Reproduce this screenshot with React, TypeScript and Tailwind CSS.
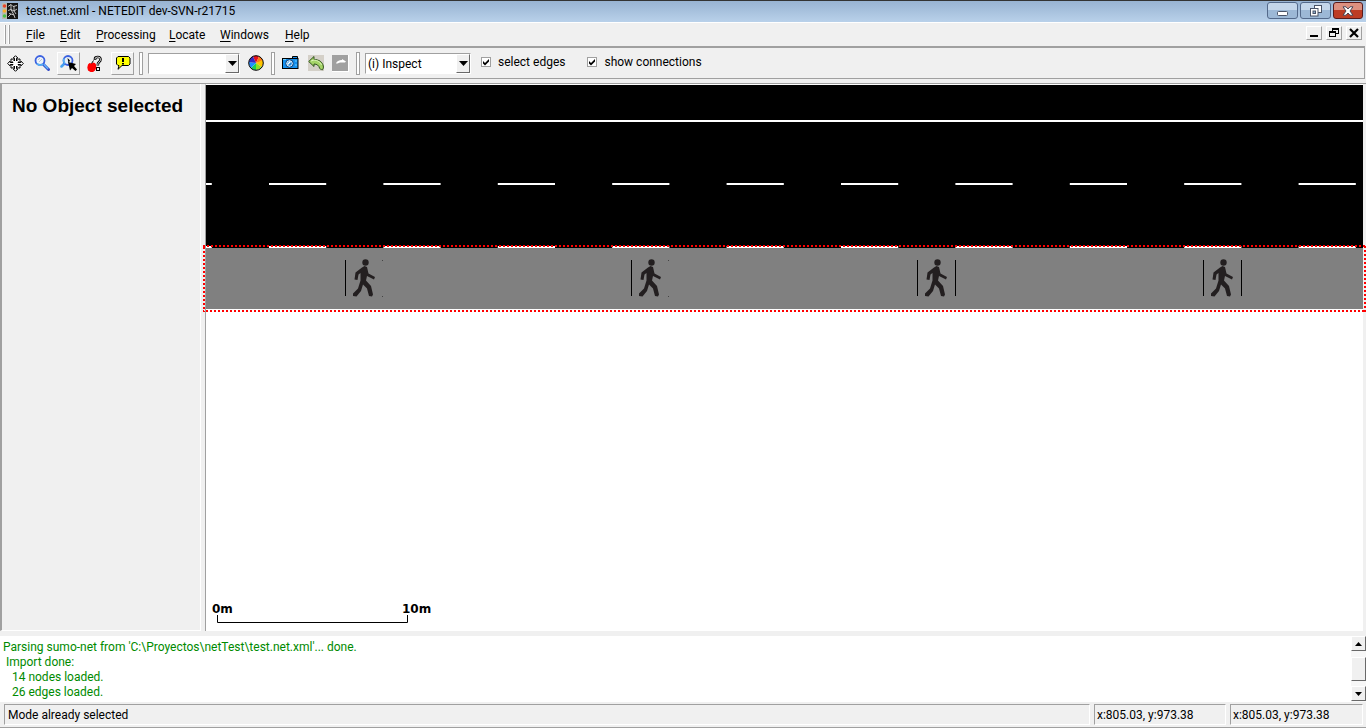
import React from 'react';

const RAISED = 'border border-t-white border-l-white border-r-[#a0a0a0] border-b-[#a0a0a0]';
const SUNKEN = 'border border-t-[#a0a0a0] border-l-[#a0a0a0] border-r-white border-b-white';

const MENUS = [
  { label: 'File', width: 'w-[34px]' },
  { label: 'Edit', width: 'w-9' },
  { label: 'Processing', width: 'w-[73px]' },
  { label: 'Locate', width: 'w-[51px]' },
  { label: 'Windows', width: 'w-[65px]' },
  { label: 'Help', width: 'w-9' },
];

const LOG_LINES = [
  "Parsing sumo-net from 'C:\\Proyectos\\netTest\\test.net.xml'... done.",
  ' Import done:',
  '   14 nodes loaded.',
  '   26 edges loaded.',
];

function AppIcon() {
  return (
    <svg className="w-4 h-4" viewBox="0 0 16 16" aria-hidden="true">
      <rect width="16" height="16" fill="#151515" />
      <rect width="5" height="16" fill="#b9b9ae" />
      <circle cx="2.5" cy="3" r="1.800" fill="#e8452a" />
      <circle cx="2.5" cy="8" r="1.800" fill="#f5b02c" />
      <circle cx="2.5" cy="13" r="1.800" fill="#4cc14a" />
      <path
        d="M6 3.500l3-2 2 2 4-1M6 7.500l3-1 3 1.500 3-2M6 14l3-3 3 1 1 3M9 1.500v5l3 5.500M12 3v5l2 3M7 10.500l2 .5"
        stroke="#e4e4e4"
        strokeWidth=".8"
        fill="none"
      />
    </svg>
  );
}

function MoveIcon() {
  return (
    <svg className="w-[17px] h-[17px]" viewBox="0 0 17 17" aria-hidden="true">
      <path
        d="M8.500.7 11 3.200H9.500V6L11.500 4H13V5.500L11 7.500H13.800V6L16.300 8.500 13.800 11V9.500H11L13 11.500V13H11.500L9.500 11V13.800H11L8.500 16.300 6 13.800H7.500V11L5.500 13H4V11.500L6 9.500H3.200V11L.7 8.500 3.200 6V7.500H6L4 5.500V4H5.500L7.500 6V3.200H6z"
        fill="#fff"
        stroke="#000"
      />
    </svg>
  );
}

function LensIcon() {
  return (
    <svg className="w-4 h-4" viewBox="0 0 16 16" aria-hidden="true">
      <path d="M9.500 9.500 14.500 14.500" stroke="#3a50c8" strokeWidth="3" strokeLinecap="round" />
      <path d="M9.500 9 14 13.800" stroke="#62b8ff" strokeWidth="1.300" />
      <circle cx="6" cy="5.500" r="4.500" fill="#eef4fa" stroke="#3c62e0" strokeWidth="1.800" />
      <path d="M3 8.500a4.500 4.500 0 0 0 6 .5" stroke="#55b4f5" strokeWidth="1.500" fill="none" />
      <path d="M4 5l2-2M5 7l3-3" stroke="#c0c8d0" />
    </svg>
  );
}

function LensCursorIcon() {
  return (
    <svg className="w-[17px] h-[17px]" viewBox="0 0 17 17" aria-hidden="true">
      <path d="M4 9 1.500 11.500" stroke="#45a0f0" strokeWidth="2.500" strokeLinecap="round" />
      <circle cx="8" cy="5.500" r="4.500" fill="#e8f0f8" stroke="#3c62e0" strokeWidth="1.800" />
      <path d="M4 3.500a4.500 4.500 0 0 0 1 5" stroke="#55b4f5" strokeWidth="1.500" fill="none" />
      <path d="M7.500 3l2.500 2.500L8.500 8z" fill="#000" />
      <path d="M8 7l8 2-2 2 3 3.500-1.500 1.500-3.500-3-2 2.500z" fill="#000" />
    </svg>
  );
}

function HelpIcon() {
  return (
    <svg className="w-[17px] h-[17px]" viewBox="0 0 17 17" aria-hidden="true">
      <path d="M8 5V4Q8 2 10.800 2T13.500 4.500q0 1.500-1.400 2.500T10.800 10.500" stroke="#000" strokeWidth="2.600" fill="none" />
      <path d="M8 4.500V4Q8 2 10.800 2T13.500 4.500q0 1.500-1.400 2.500T10.800 10" stroke="#f0f0f0" strokeWidth=".9" fill="none" />
      <rect x="9.500" y="12.500" width="3" height="3" fill="#f0f0f0" stroke="#000" />
      <path d="M1 9.500 2.500 8l2 .5L6 7.500l2 .5 1.200 2v3L8 15.500 6 17H3.500L1 15.500.3 12.500z" fill="#f00" />
      <path d="M4.500 8.500 6.500 5.500" stroke="#000" />
    </svg>
  );
}

function BalloonIcon() {
  return (
    <svg className="w-4 h-4" viewBox="0 0 16 16" aria-hidden="true">
      <path d="M3 1.500h10.500L15 3v6l-1.500 1.500H7l-4 3.800 1-3.800H3L1.500 9V3z" fill="#ffff00" stroke="#000" />
      <path d="M8 3V7M8 8v1.500" stroke="#000" strokeWidth="2" />
    </svg>
  );
}

function ColorWheelIcon() {
  return (
    <svg className="w-4 h-4" viewBox="0 0 16 16" aria-hidden="true">
      <path d="M8 8 5 1.500A7 7 0 0 1 11 1.500z" fill="#e8101c" />
      <path d="M8 8 11 1.500A7 7 0 0 1 15 6z" fill="#ff7a1a" />
      <path d="M8 8 14.500 5A7 7 0 0 1 13.500 12z" fill="#ffc400" />
      <path d="M8 8 13.500 12A7 7 0 0 1 8 15z" fill="#90e020" />
      <path d="M8 8V15A7 7 0 0 1 3 13z" fill="#18d058" />
      <path d="M8 8 3 13A7 7 0 0 1 1 7z" fill="#1e90ff" />
      <path d="M8 8 1 7A7 7 0 0 1 5 1.500z" fill="#3828c0" />
      <circle cx="8" cy="8" r="7.300" fill="none" stroke="#000" />
    </svg>
  );
}

function CameraIcon() {
  return (
    <svg className="w-[17px] h-4" viewBox="0 0 17 16" aria-hidden="true">
      <path d="M10.500 3.500V1.500h5v2" fill="#1e90e8" stroke="#000" />
      <rect x=".5" y="3.500" width="15.500" height="10" fill="#1590ee" stroke="#000" />
      <path d="M1 4.500h3M13 6h2M13 10h2" stroke="#70d0ff" />
      <circle cx="7.500" cy="8.500" r="3.800" fill="#d8efff" stroke="#043c78" />
      <circle cx="7.500" cy="8.500" r="2.300" fill="#1e88e0" />
      <path d="M5.500 9.500 8.500 6.500" stroke="#fff" strokeWidth="1.500" />
    </svg>
  );
}

function UndoIcon() {
  return (
    <svg className="w-4 h-4" viewBox="0 0 16 16" aria-hidden="true">
      <rect width="16" height="16" fill="#d4d0c8" />
      <path
        d="M.7 6.500 6 1.500v3c5 0 8.500 2.500 9.300 6.500.3 1.500 0 2.500-.8 3.800-1.500-.3-2-.5-2.800-1.300C11 10.500 9 9 6 9v2.500z"
        fill="#a5d468"
        stroke="#31551c"
      />
      <path d="M3 6l3-1c4 .5 6.500 2 7.500 5" stroke="#dcf5b8" fill="none" />
    </svg>
  );
}

function RedoIcon() {
  return (
    <svg className="w-[17px] h-[17px] border-r border-b border-white" viewBox="0 0 16 16" aria-hidden="true">
      <rect width="16" height="16" fill="#a0a0a0" />
      <path d="M4 8.500C4.500 6.500 7 5 10 5V4l4 2.500-1 1h-2.500L8 7.500 5.500 8.500z" fill="#fff" />
    </svg>
  );
}

function Grip() {
  return <div className="w-1 h-[23px] shrink-0 border border-[#a0a0a0] bg-white" />;
}

interface ToolButtonProps {
  label: string;
  raised?: boolean;
  children: React.ReactNode;
}

function ToolButton({ label, raised, children }: ToolButtonProps) {
  return (
    <button
      type="button"
      aria-label={label}
      className={`w-[23px] h-[23px] shrink-0 flex items-center justify-center border ${
        raised ? 'border-t-white border-l-white border-r-[#a0a0a0] border-b-[#a0a0a0]' : 'border-transparent'
      }`}
    >
      {children}
    </button>
  );
}

interface ComboProps {
  label: string;
  options: string[];
  className: string;
}

function Combo({ label, options, className }: ComboProps) {
  return (
    <div className={`relative h-[21px] shrink-0 bg-white ${SUNKEN} ${className}`}>
      <select aria-label={label} className="w-full h-full appearance-none bg-white pl-0.5 pr-4 pt-px text-xs leading-4 outline-none">
        {options.map((option) => (
          <option key={option}>{option}</option>
        ))}
      </select>
      <span className="pointer-events-none absolute right-0 inset-y-0 w-3.5 flex items-center justify-center bg-[#f0f0f0] border border-t-white border-l-white border-r-[#696969] border-b-[#696969]">
        <svg className="w-[9px] h-[5px]" viewBox="0 0 9 5" aria-hidden="true">
          <path d="M0 0h9L4.500 5z" />
        </svg>
      </span>
    </div>
  );
}

function Check({ id, label }: { id: string; label: string }) {
  return (
    <div className="flex items-center gap-[7px] pb-0.5">
      <span className="relative w-2.5 h-2.5 flex">
        <input
          id={id}
          type="checkbox"
          defaultChecked
          className="peer w-2.5 h-2.5 appearance-none bg-white border border-[#a0a0a0]"
        />
        <svg className="pointer-events-none absolute inset-0 w-2.5 h-2.5 hidden peer-checked:block" viewBox="0 0 10 10" aria-hidden="true">
          <path d="M2 4v2.500L4 8.500 8 4.500V2L4 6z" />
        </svg>
      </span>
      <label htmlFor={id}>{label}</label>
    </div>
  );
}

function TitleBar() {
  const frame = 'h-[17px] flex items-center justify-center rounded-[3px] border';
  const blue = 'w-[31px] border-[#53698a] bg-linear-to-b from-[#c4d6ea] from-50% to-[#9cb8d6] to-50%';
  return (
    <header className="h-[23px] shrink-0 flex items-start border-t border-t-[#333] border-b border-b-white bg-linear-to-b from-[#98b3d2] to-[#b9d1ea] pl-0.5 pr-[3px]">
      <div className="flex-1 flex items-center gap-2 pt-px">
        <AppIcon />
        <h1 className="pt-px">test.net.xml - NETEDIT dev-SVN-r21715</h1>
      </div>
      <div className="flex gap-0.5 pt-px">
        <button type="button" aria-label="Minimize" className={`${frame} ${blue}`}>
          <svg className="w-3 h-4" viewBox="0 0 12 16" aria-hidden="true">
            <rect x=".5" y="8.500" width="10" height="4" rx="1" fill="#fff" stroke="#4a5468" />
          </svg>
        </button>
        <button type="button" aria-label="Restore" className={`${frame} ${blue}`}>
          <svg className="w-3 h-3" viewBox="0 0 12 12" aria-hidden="true">
            <rect x="4.500" y=".5" width="7" height="7" fill="#fff" stroke="#4a5468" />
            <rect x=".5" y="3.500" width="7.500" height="7.500" fill="#fff" stroke="#4a5468" />
            <rect x="3" y="6" width="2.500" height="2.500" fill="#8fb0d0" stroke="#4a5468" />
          </svg>
        </button>
        <button
          type="button"
          aria-label="Close"
          className={`${frame} w-[30px] border-[#5a1a1a] bg-linear-to-b from-[#dd9080] from-50% to-[#bd3c24] to-50%`}
        >
          <svg className="w-3 h-2.5" viewBox="0 0 12 10" aria-hidden="true">
            <path d="M1 .8h3l2 2.200 2-2.200h3L8 5l3 4.200H8L6 7 4 9.200H1L4 5z" fill="#fff" stroke="#4a4454" />
          </svg>
        </button>
      </div>
    </header>
  );
}

function MenuBar() {
  const mdi = `w-4 h-3.5 flex items-center justify-center ${RAISED}`;
  return (
    <nav className="h-[23px] shrink-0 flex items-center pl-1 pr-1">
      <div className="flex gap-0.5 h-[19px]">
        <div className="w-0.5 border-l border-l-white border-r border-r-[#a0a0a0]" />
        <div className="w-0.5 border-l border-l-white border-r border-r-[#a0a0a0]" />
      </div>
      <div className="flex-1 flex pl-4">
        {MENUS.map(({ label, width }) => (
          <button key={label} type="button" className={`${width} text-left`}>
            <span className="underline underline-offset-2">{label[0]}</span>
            {label.slice(1)}
          </button>
        ))}
      </div>
      <div className="flex gap-1 pb-1">
        <button type="button" aria-label="Minimize view" className={mdi}>
          <svg className="w-2.5 h-2.5" viewBox="0 0 10 10" aria-hidden="true">
            <rect x="1" y="7" width="8" height="2" />
          </svg>
        </button>
        <button type="button" aria-label="Restore view" className={mdi}>
          <svg className="w-2.5 h-2.5" viewBox="0 0 10 10" shapeRendering="crispEdges" aria-hidden="true">
            <path d="M3 0h7v6H7V5h2V2H4v1H3zM0 3h7v6H0zM1 5v3h5V5z" fillRule="evenodd" />
          </svg>
        </button>
        <button type="button" aria-label="Close view" className={mdi}>
          <svg className="w-2.5 h-2.5" viewBox="0 0 10 10" aria-hidden="true">
            <path d="M1 1l8 8M9 1L1 9" stroke="#000" strokeWidth="2.200" />
          </svg>
        </button>
      </div>
    </nav>
  );
}

function Toolbar() {
  return (
    <div className="h-[33px] shrink-0 mr-px flex items-center border-t-2 border-t-[#a0a0a0] border-x border-b border-[#a0a0a0] pl-[3px]">
      <div className="flex items-center gap-1 pr-1">
        <ToolButton label="Move view"><MoveIcon /></ToolButton>
        <div className="flex items-center gap-1 -ml-px pr-px">
          <ToolButton label="Zoom"><LensIcon /></ToolButton>
          <ToolButton label="Zoom style" raised><LensCursorIcon /></ToolButton>
          <ToolButton label="What is this"><HelpIcon /></ToolButton>
          <ToolButton label="Show tooltips" raised><BalloonIcon /></ToolButton>
        </div>
      </div>
      <Grip />
      <Combo label="Coloring scheme" options={['']} className="w-[92px] ml-[5px]" />
      <div className="px-1 flex"><ToolButton label="Edit coloring"><ColorWheelIcon /></ToolButton></div>
      <Grip />
      <div className="flex items-center gap-0.5 px-1">
        <ToolButton label="Snapshot"><CameraIcon /></ToolButton>
        <ToolButton label="Undo"><UndoIcon /></ToolButton>
        <ToolButton label="Redo"><RedoIcon /></ToolButton>
      </div>
      <Grip />
      <Combo label="Edit mode" options={['(i) Inspect']} className="w-[106px] ml-[5px]" />
      <div className="flex gap-[22px] pl-2.5">
        <Check id="select-edges" label="select edges" />
        <Check id="show-connections" label="show connections" />
      </div>
    </div>
  );
}

interface PedestrianProps {
  x: number;
  closed: boolean;
}

// sidewalk symbol, framed by one or two thin bars
function Pedestrian({ x, closed }: PedestrianProps) {
  return (
    <g transform={`translate(${x} 175)`}>
      <rect width="1" height="36" fill="#000" />
      {closed && <rect x="38" width="1" height="36" fill="#000" />}
      <circle cx="20.500" cy="2.500" r="3.200" fill="#231f20" />
      <path
        d="M17 7.500 19.500 6 22 7 23.500 13.500 30 17 29 19.500 22 16 21 20.500 26 26 28 34.500 27 36.500 24 36 22 28.500 18 24.500 16 31 11.500 36.500 8 36 8 33.500 13 28.500 15.500 20.500 15.500 13 13.500 14.500 12.500 20 9.500 19.500 10.500 12.500z"
        fill="#231f20"
      />
      {!closed && <path d="M37 0h1v1h-1zM37 36h1v1h-1z" fill="#444" />}
    </g>
  );
}

function NetworkView() {
  return (
    <main className="relative flex-1 min-w-0 mr-[3px] border-l border-l-[#a0a0a0] border-t border-t-white bg-white">
      <svg className="absolute inset-0 w-full h-full" role="img" aria-label="Road network">
        <rect width="100%" height="163" fill="#000" />
        <rect y="35" width="100%" height="2" fill="#fff" />
        <line x1="-51.400" y1="99" x2="100%" y2="99" stroke="#fff" strokeWidth="2" strokeDasharray="57.200 57.200" />
        <line x1="-51.400" y1="162" x2="100%" y2="162" stroke="#fff" strokeWidth="2" strokeDasharray="57.200 57.200" />
        <rect y="163" width="100%" height="61" fill="#808080" />
        <Pedestrian x={139} closed={false} />
        <Pedestrian x={425} closed={false} />
        <Pedestrian x={711} closed />
        <Pedestrian x={997} closed />
        <path d="M11.500 530v7.500h190V530" fill="none" stroke="#000" />
        <g className="font-['DejaVu_Sans',sans-serif] text-xs font-bold">
          <text x="6" y="528">0m</text>
          <text x="196" y="528">10m</text>
        </g>
      </svg>
      <svg className="pointer-events-none absolute top-[160px] -left-[3px] w-[calc(100%+6px)] h-[67px]" aria-hidden="true">
        <rect width="100%" height="100%" fill="none" stroke="#f00" strokeWidth="4" strokeDasharray="2 2" />
      </svg>
    </main>
  );
}

function ScrollArrow({ label, d }: { label: string; d: string }) {
  return (
    <button
      type="button"
      aria-label={label}
      className="w-[15px] h-[15px] flex items-center justify-center bg-[#f0f0f0] border border-t-white border-l-white border-r-[#696969] border-b-[#696969]"
    >
      <svg className="w-[7px] h-1" viewBox="0 0 7 4" aria-hidden="true">
        <path d={d} />
      </svg>
    </button>
  );
}

function MessageLog() {
  return (
    <section className="h-[66px] shrink-0 flex bg-white">
      <pre className="flex-1 overflow-hidden pl-[3px] pt-1 font-[inherit] leading-[15px] text-[#008a00]">{LOG_LINES.join('\n')}</pre>
      <div className="w-[15px] flex flex-col justify-between pb-px bg-[#f7f7f7]">
        <ScrollArrow label="Scroll up" d="M0 4h7L3.500 0z" />
        <div className="h-6 bg-[#f0f0f0] border border-t-white border-l-white border-r-[#696969] border-b-[#696969]" />
        <ScrollArrow label="Scroll down" d="M0 0h7L3.500 4z" />
      </div>
    </section>
  );
}

function StatusBar() {
  const cell = `flex items-center ${SUNKEN}`;
  return (
    <footer className="h-[26px] shrink-0 flex gap-1 pt-0.5 pb-0.5 pl-1 pr-[3px] border-b border-b-[#a0a0a0]">
      <div className={`flex-1 pl-[3px] ${cell}`}>Mode already selected</div>
      <div className={`w-[132px] pl-0.5 ${cell}`}>x:805.03, y:973.38</div>
      <div className={`w-[133px] pl-0.5 ${cell}`}>x:805.03, y:973.38</div>
    </footer>
  );
}

export default function App() {
  return (
    <div className="h-screen flex flex-col bg-[#f0f0f0] text-black text-xs leading-4 whitespace-nowrap overflow-hidden font-[Roboto,'Open_Sans',sans-serif]">
      <TitleBar />
      <MenuBar />
      <Toolbar />
      <div className="flex-1 min-h-0 mt-1 flex border-t border-t-[#a0a0a0]">
        <aside className="w-[201px] shrink-0 mr-1 border-l-2 border-l-[#a0a0a0] border-r border-r-white border-b border-b-white pl-2.5 pt-2">
          <h2 className="font-['Liberation_Sans',Arial,sans-serif] text-[19px] leading-7 font-bold">No Object selected</h2>
        </aside>
        <NetworkView />
      </div>
      <div className="h-1 shrink-0 mt-px" />
      <MessageLog />
      <StatusBar />
    </div>
  );
}
